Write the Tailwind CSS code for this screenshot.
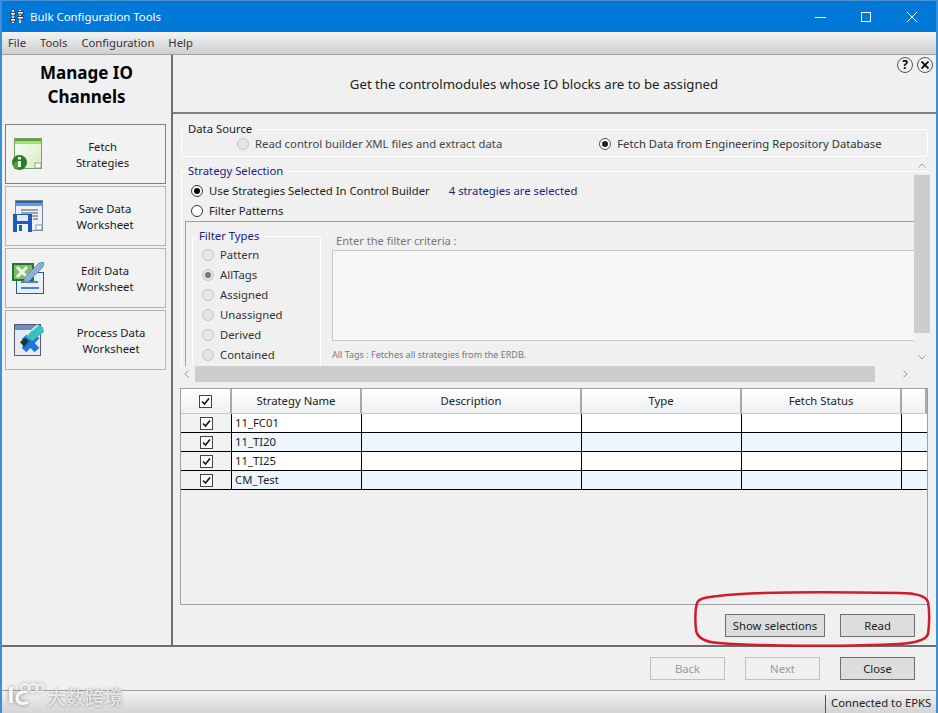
<!DOCTYPE html>
<html lang="en">
<head>
<meta charset="UTF-8">
<title>Bulk Configuration Tools</title>
<script src="https://cdn.jsdelivr.net/npm/@tailwindcss/browser@4"></script>
</head>
<body class="bg-[#f0f0f0]">
<div class="relative w-[938px] h-[713px] overflow-hidden flex flex-col bg-[#f0f0f0] text-[11.3px] leading-4 text-[#1a1a1a] font-['Noto_Sans','Open_Sans',sans-serif] border-l-2 border-r-2 border-[#3c8fd6]">

  <!-- Title bar -->
  <div class="h-[32px] shrink-0 -mx-[2px] bg-[#0078d7] border-t border-[#4a90d0] flex items-center text-white text-[11.4px]">
    <svg class="ml-[10px] w-[14px] h-[15px]" viewBox="0 0 14 15">
      <path d="M2 1h2v13H2zM9 1h2v13H9z" fill="#cfd8e2"/>
      <path d="M0.5 3.5h5v2.500h-5zM0.500 9.500h5v2.500h-5zM7.500 2.500h6v2.500h-6zM7.500 7.500h6v2.500h-6z" fill="#fff" stroke="#222" stroke-width="0.8"/>
    </svg>
    <span class="ml-[6px]">Bulk Configuration Tools</span>
    <div class="ml-auto flex items-center">
      <svg class="w-[11px] h-[10px] mr-[35px]" viewBox="0 0 11 10"><path d="M0 5.500h11" stroke="#fff"/></svg>
      <svg class="w-[10px] h-[10px] mr-[36px]" viewBox="0 0 10 10"><rect x="0.500" y="0.500" width="9" height="9" fill="none" stroke="#fff"/></svg>
      <svg class="w-[10px] h-[10px] mr-[21px]" viewBox="0 0 10 10"><path d="M0 0l10 10M10 0L0 10" stroke="#fff"/></svg>
    </div>
  </div>

  <!-- Menu bar -->
  <div class="h-[23px] shrink-0 flex items-center gap-[14px] pl-[6px] bg-gradient-to-b from-[#f3f3f3] to-[#cfcfcf] border-b border-[#a0a0a0] text-[#333] text-[11.25px]">
    <span>File</span><span>Tools</span><span>Configuration</span><span>Help</span>
  </div>

  <!-- Main -->
  <div class="h-[590px] shrink-0 flex">
    <!-- Left nav -->
    <div class="w-[169px] shrink-0 flex flex-col">
      <div class="h-[69px] pt-[6px] text-center text-[17px] leading-[24px] font-bold text-black">Manage IO<br>Channels</div>
      <div class="flex flex-col gap-[2px] pl-[3px] pr-[5px]">
        <div class="h-[60px] flex items-center border border-[#808080] bg-[#f2f2f2]">
          <svg class="ml-[6px] w-[30px] h-[32px]" viewBox="0 0 30 32">
            <defs><linearGradient id="fg" x1="0" y1="0" x2="1" y2="1"><stop offset="0" stop-color="#f8fcf2"/><stop offset="1" stop-color="#d8ecc4"/></linearGradient></defs>
            <rect x="2.500" y="0.500" width="27" height="30" fill="url(#fg)" stroke="#77a35f"/>
            <rect x="3" y="1" width="26" height="2" fill="#5f9e3a"/>
            <rect x="3" y="3" width="26" height="3" fill="#a8d878"/>
            <rect x="23" y="25" width="6" height="5" fill="#fff" stroke="#8aa090"/>
            <circle cx="7.500" cy="24.500" r="7.500" fill="#2d7a2d"/>
            <circle cx="5" cy="27" r="3.500" fill="#55a040"/>
            <rect x="6" y="19" width="3" height="2.500" fill="#e4f4d8"/>
            <rect x="6" y="23" width="3" height="6" fill="#e4f4d8"/>
          </svg>
          <div class="flex-1 text-center pr-[2px] pt-[2px]">Fetch<br>Strategies</div>
        </div>
        <div class="h-[60px] flex items-center border border-[#b4b4b4] bg-[#f2f2f2]">
          <svg class="ml-[7px] w-[30px] h-[32px]" viewBox="0 0 30 32">
            <rect x="2.500" y="0.500" width="27" height="30" fill="#eef1f6" stroke="#74879e"/>
            <rect x="3" y="1" width="26" height="2" fill="#35639f"/>
            <rect x="3" y="3" width="26" height="3" fill="#5f9fe0"/>
            <path d="M8 10h17M8 13h17M8 16h17M20 19h5" stroke="#808890" stroke-width="1.500"/>
            <rect x="23" y="25" width="6" height="5" fill="#fff" stroke="#8a97a8"/>
            <rect x="0" y="14" width="19" height="18" fill="#1c5cb8"/>
            <rect x="4" y="15" width="11" height="6" fill="#dfe9f8"/>
            <rect x="4" y="24" width="11" height="8" fill="#eef3fb"/>
            <rect x="6" y="25" width="3" height="6" fill="#1c5cb8"/>
          </svg>
          <div class="flex-1 text-center pl-[2px] pt-[2px]">Save Data<br>Worksheet</div>
        </div>
        <div class="h-[60px] flex items-center border border-[#b4b4b4] bg-[#f2f2f2]">
          <svg class="ml-[6px] w-[32px] h-[32px]" viewBox="0 0 32 32">
            <rect x="4.500" y="10.500" width="27" height="21" fill="#e6effa" stroke="#1c5cb8"/>
            <path d="M9 20h17M9 26h18" stroke="#1c5cb8" stroke-width="1.500"/>
            <rect x="0" y="1" width="22" height="18" fill="#1c7a34"/>
            <rect x="2" y="3" width="18" height="14" fill="#7fbc6a"/>
            <path d="M5 5l10 10M15 5L5 15" stroke="#f0f8ea" stroke-width="3"/>
            <path d="M13 15L27 1l4 4-14 14-5 1z" fill="#8fb0dc" stroke="#6b93c8"/>
            <path d="M27 0h5v5z" fill="#46b8b0"/>
          </svg>
          <div class="flex-1 text-center pl-[1px] pt-[2px]">Edit Data<br>Worksheet</div>
        </div>
        <div class="h-[60px] flex items-center border border-[#b4b4b4] bg-[#f2f2f2]">
          <svg class="ml-[8px] w-[30px] h-[32px]" viewBox="0 0 30 32">
            <rect x="0.500" y="0.500" width="26" height="31" fill="#e6ebf2" stroke="#505d74"/>
            <rect x="1" y="1" width="25" height="5" fill="#6f8cc0"/>
            <path d="M10 13l13 13M23 12L10 26" stroke="#1d78dc" stroke-width="6.500"/>
            <path d="M6 18l5-4 4 3-5 6z" fill="#1c3a2c"/>
            <path d="M12 13L23 1l6 2 1 5-12 9z" fill="#3cc0bc"/>
            <path d="M18 6l6-5" stroke="#a8f0ec" stroke-width="2"/>
          </svg>
          <div class="flex-1 text-center pl-[13px] pt-[2px]">Process Data<br>Worksheet</div>
        </div>
      </div>
    </div>

    <!-- Divider -->
    <div class="w-[2px] shrink-0 bg-[#6e6e6e]"></div>

    <!-- Right pane -->
    <div class="flex-1 min-w-0 flex flex-col">
      <!-- Heading -->
      <div class="relative h-[59px] shrink-0 border-b-2 border-[#808080] flex items-center justify-center pr-[41px] pt-[1px] text-[13.2px] text-[#222]">
        Get the controlmodules whose IO blocks are to be assigned
        <div class="absolute top-[2px] right-[3px] flex gap-[4px]">
          <span class="w-[16px] h-[16px] rounded-full border border-[#555] flex items-center justify-center text-[12px] leading-none font-bold text-black">?</span>
          <span class="w-[16px] h-[16px] rounded-full border border-[#555] flex items-center justify-center">
            <svg class="w-[8px] h-[8px]" viewBox="0 0 8 8"><path d="M0.500 0.500l7 7M7.500 0.500l-7 7" stroke="#000" stroke-width="1.800"/></svg>
          </span>
        </div>
      </div>

      <div class="flex-1 min-h-0 flex flex-col pl-[7px] pr-[8px]">
        <!-- Data source -->
        <div class="relative ml-[1px] h-[28px] mt-[15px] shrink-0 border border-white rounded-[3px] flex items-center pt-[1px]">
          <span class="absolute -top-[9px] left-[4px] px-[2px] bg-[#f0f0f0] text-[#222]">Data Source</span>
          <span class="ml-[55px] w-[12px] h-[12px] rounded-full border border-[#c4c4c4] bg-[#e6e6e6]"></span>
          <span class="ml-[6px] text-[#444]">Read control builder XML files and extract data</span>
          <span class="ml-[97px] w-[12px] h-[12px] rounded-full border border-[#555] bg-white flex items-center justify-center"><span class="w-[6px] h-[6px] rounded-full bg-[#222]"></span></span>
          <span class="ml-[6px] text-[#333] text-[11.25px]">Fetch Data from Engineering Repository Database</span>
        </div>

        <!-- Strategy selection with scrollbars -->
        <div class="relative h-[220px] mt-[6px] shrink-0 ml-[1px]">
          <div class="absolute top-[8px] left-0 right-0 h-[1px] bg-white"></div>
          <div class="absolute top-[8px] left-0 w-[1px] h-[195px] bg-white"></div>
          <span class="relative left-[5px] px-[2px] bg-[#f0f0f0] text-[#1a237e]">Strategy Selection</span>
          <div class="flex h-[187px]">
            <!-- Scrolled content -->
            <div class="w-[733px] shrink-0 flex flex-col pl-[4px] pt-[2px]">
              <div class="h-[20px] shrink-0 flex items-center pl-[6px]">
                <span class="w-[12px] h-[12px] rounded-full border border-[#333] bg-white flex items-center justify-center"><span class="w-[6px] h-[6px] rounded-full bg-black"></span></span>
                <span class="ml-[6px] text-[#222]">Use Strategies Selected In Control Builder</span>
                <span class="ml-[19px] text-[#1a237e]">4 strategies are selected</span>
              </div>
              <div class="h-[20px] shrink-0 flex items-center pl-[6px]">
                <span class="w-[12px] h-[12px] rounded-full border border-[#333] bg-white"></span>
                <span class="ml-[6px] text-[#222]">Filter Patterns</span>
              </div>
              <div class="flex-1 min-h-0 overflow-hidden border-t border-l border-[#a0a0a0] flex">
                <div class="relative w-[129px] ml-[6px] mt-[14px] shrink-0 border border-white rounded-t-[3px] border-b-0 h-[200px]">
                  <span class="absolute -top-[9px] left-[4px] px-[2px] bg-[#f0f0f0] text-[#1a237e]">Filter Types</span>
                  <div class="pt-[8px] pl-[9px] flex flex-col text-[#333]">
                    <div class="h-[20px] flex items-center"><span class="w-[12px] h-[12px] rounded-full border border-[#c4c4c4] bg-[#e6e6e6]"></span><span class="ml-[6px]">Pattern</span></div>
                    <div class="h-[20px] flex items-center"><span class="w-[12px] h-[12px] rounded-full border border-[#c4c4c4] bg-[#e6e6e6] flex items-center justify-center"><span class="w-[6px] h-[6px] rounded-full bg-[#777]"></span></span><span class="ml-[6px]">AllTags</span></div>
                    <div class="h-[20px] flex items-center"><span class="w-[12px] h-[12px] rounded-full border border-[#c4c4c4] bg-[#e6e6e6]"></span><span class="ml-[6px]">Assigned</span></div>
                    <div class="h-[20px] flex items-center"><span class="w-[12px] h-[12px] rounded-full border border-[#c4c4c4] bg-[#e6e6e6]"></span><span class="ml-[6px]">Unassigned</span></div>
                    <div class="h-[20px] flex items-center"><span class="w-[12px] h-[12px] rounded-full border border-[#c4c4c4] bg-[#e6e6e6]"></span><span class="ml-[6px]">Derived</span></div>
                    <div class="h-[20px] flex items-center"><span class="w-[12px] h-[12px] rounded-full border border-[#c4c4c4] bg-[#e6e6e6]"></span><span class="ml-[6px]">Contained</span></div>
                  </div>
                </div>
                <div class="flex-1 min-w-0 ml-[11px] flex flex-col">
                  <div class="h-[28px] shrink-0 pl-[4px] pt-[11px] text-[#777] text-[11.1px]">Enter the filter criteria :</div>
                  <div class="h-[91px] shrink-0 border-t border-b border-l border-[#c8c8c8] bg-[#f6f6f6]"></div>
                  <div class="pt-[6px] text-[9px] text-[#777]">All Tags : Fetches all strategies from the ERDB.</div>
                </div>
              </div>
            </div>
            <!-- Vertical scrollbar -->
            <div class="relative w-[16px] shrink-0 -mt-[16px] h-[203px]">
              <svg class="absolute top-0 left-[4px] w-[8px] h-[5px]" viewBox="0 0 8 5"><path d="M0.500 4.500L4 1l3.500 3.500" fill="none" stroke="#999"/></svg>
              <div class="absolute top-[12px] left-0 w-[16px] h-[158px] bg-[#cdcdcd]"></div>
              <svg class="absolute top-[192px] left-[4px] w-[8px] h-[5px]" viewBox="0 0 8 5"><path d="M0.500 0.500L4 4l3.500-3.500" fill="none" stroke="#999"/></svg>
            </div>
          </div>
          <!-- Horizontal scrollbar -->
          <div class="flex items-center h-[16px] pl-[3px]">
            <svg class="w-[5px] h-[8px]" viewBox="0 0 5 8"><path d="M4.500 0.500L1 4l3.500 3.500" fill="none" stroke="#999"/></svg>
            <div class="ml-[6px] w-[680px] h-[16px] bg-[#cdcdcd]"></div>
            <svg class="ml-[28px] w-[5px] h-[8px]" viewBox="0 0 5 8"><path d="M0.500 0.500L4 4 0.500 7.500" fill="none" stroke="#999"/></svg>
          </div>
        </div>

        <!-- Data grid -->
        <div class="h-[217px] shrink-0 mt-[5px] border border-[#a0a0a0] flex flex-col">
          <div class="h-[25px] shrink-0 grid grid-cols-[51px_130px_220px_160px_160px_1fr] bg-gradient-to-b from-white to-[#eef0f3] border-b border-[#c8c8c8] border-r-2 border-r-[#a8a8a8] text-[#222]">
            <div class="border-r-2 border-[#a8a8a8] flex items-center justify-center"><span class="w-[13px] h-[13px] border border-[#444] bg-white flex items-center justify-center"><svg class="w-[9px] h-[9px]" viewBox="0 0 9 9"><path d="M1 4.500l2.500 2.500L8 1.500" fill="none" stroke="#111" stroke-width="1.600"/></svg></span></div>
            <div class="border-r-2 border-[#a8a8a8] flex items-center justify-center">Strategy Name</div>
            <div class="border-r-2 border-[#a8a8a8] flex items-center justify-center">Description</div>
            <div class="border-r-2 border-[#a8a8a8] flex items-center justify-center">Type</div>
            <div class="border-r-2 border-[#a8a8a8] flex items-center justify-center">Fetch Status</div>
            <div></div>
          </div>
          <div id="rows"></div>
        </div>

        <!-- Read buttons -->
        <div class="flex justify-end gap-[15px] pr-[13px] mt-[9px]">
          <button class="w-[100px] h-[23px] border border-[#707070] bg-[#dddddd] text-[#222]">Show selections</button>
          <button class="w-[75px] h-[23px] border border-[#707070] bg-[#dddddd] text-[#222]">Read</button>
        </div>
      </div>
    </div>
  </div>

  <!-- Footer buttons -->
  <div class="h-[45px] shrink-0 border-t-2 border-[#6e6e6e] flex items-start justify-end gap-[20px] pt-[10px] pr-[21px]">
    <button class="w-[75px] h-[23px] border border-[#c0c0c0] text-[#9a9a9a]">Back</button>
    <button class="w-[75px] h-[23px] border border-[#c0c0c0] text-[#9a9a9a]">Next</button>
    <button class="w-[75px] h-[23px] border border-[#707070] bg-[#dddddd] text-[#222]">Close</button>
  </div>

  <!-- Status bar -->
  <div class="flex-1 min-h-0 flex items-center justify-end bg-gradient-to-b from-[#f2f2f2] to-[#d4d4d4] border-t border-[#a0a0a0] text-[#222] pt-[3px]">
    <span class="h-[18px] border-l border-[#555] pl-[5px] w-[111px] whitespace-nowrap">Connected to EPKS</span>
  </div>

  <!-- Hand-drawn annotation over the buttons -->
  <svg class="absolute left-[692px] top-[590px] w-[238px] h-[58px]" viewBox="0 0 238 58">
    <path d="M24 6C60 1 150 2 205 3C222 3 232 6 234 12C236 22 235 38 234 44C232 50 222 53 205 54C150 57 60 56 25 53C10 52 3 48 2 40C1 30 1 20 3 13C5 8 14 7 24 6Z" fill="none" stroke="#d01c2c" stroke-width="2.500"/>
  </svg>

  <!-- Watermark -->
  <div class="absolute left-[6px] top-[682px] flex items-center text-white/75 [text-shadow:0_0_3px_#777] opacity-85">
    <svg class="w-[36px] h-[24px] drop-shadow-[0_0_2px_#777]" viewBox="0 0 36 24">
      <path d="M3 5v16" fill="none" stroke="#fff" stroke-width="3.500"/>
      <path d="M19 10c-6-1-10 2-10 6 0 5 5 7 11 4" fill="none" stroke="#fff" stroke-width="3"/>
      <circle cx="17" cy="6" r="4" fill="none" stroke="#fff" stroke-width="1.300"/>
      <circle cx="25" cy="6" r="4" fill="none" stroke="#fff" stroke-width="1.300"/>
      <circle cx="32" cy="6" r="3.500" fill="none" stroke="#fff" stroke-width="1.300"/>
    </svg>
    <span class="ml-[3px] mt-[4px] text-[19px] leading-none font-['Noto_Sans_CJK_SC',sans-serif] font-medium">大数跨境</span>
  </div>
</div>
<script>
  // Grid rows
  const strategies = ['11_FC01', '11_TI20', '11_TI25', 'CM_Test'];
  document.getElementById('rows').innerHTML = strategies.map((name, i) => `
    <div class="h-[19px] grid grid-cols-[51px_130px_220px_160px_160px_1fr] border-b border-black ${i % 2 ? 'bg-[#edf6fd]' : 'bg-white'}">
      <div class="bg-[#f2f2f2] border-r border-black flex items-center justify-center"><span class="w-[13px] h-[13px] border border-[#444] bg-white flex items-center justify-center"><svg class="w-[9px] h-[9px]" viewBox="0 0 9 9"><path d="M1 4.500l2.500 2.500L8 1.500" fill="none" stroke="#111" stroke-width="1.600"/></svg></span></div>
      <div class="border-r border-black pl-[3px] text-[#222] leading-[18px]">${name}</div>
      <div class="border-r border-black"></div>
      <div class="border-r border-black"></div>
      <div class="border-r border-black"></div>
      <div></div>
    </div>`).join('');
</script>
</body>
</html>
